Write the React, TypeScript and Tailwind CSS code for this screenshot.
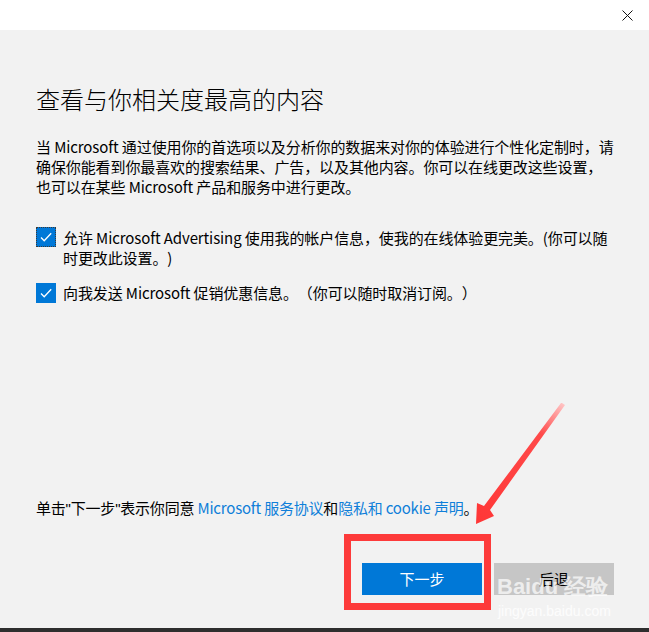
import React from "react";

const font = { fontFamily: '"Noto Sans CJK SC", "Noto Sans", sans-serif' };
const latin = { fontFamily: '"Liberation Sans", sans-serif' };

function CheckBox({ focused }: { focused?: boolean }) {
  return (
    <div
      className={
        "w-5 h-5 shrink-0 bg-[#0078d7] flex items-center justify-center " +
        (focused ? "outline outline-1 outline-dotted outline-[#3a3a3a] -outline-offset-1" : "")
      }
    >
      <svg width="20" height="20" viewBox="0 0 20 20">
        <path d="M5 10.5 L8.2 13.7 L15.2 6.2" fill="none" stroke="#fff" strokeWidth="1.3" />
      </svg>
    </div>
  );
}

export default function App() {
  return (
    <div
      className="relative w-[649px] h-[632px] flex flex-col bg-[#f2f2f2] text-black [text-spacing-trim:space-all]"
      style={font}
    >
      {/* title bar */}
      <div className="h-[30px] bg-white flex items-center justify-end pr-[16px]">
        <svg width="11" height="11" viewBox="0 0 11 11">
          <path d="M0.5 0.5 L10.5 10.5 M10.5 0.5 L0.5 10.5" stroke="#111" strokeWidth="1" />
        </svg>
      </div>

      <div className="flex-1 pl-[36px] flex flex-col">
        <h1 className="mt-[53px] text-[24px] leading-[32px] font-light">
          查看与你相关度最高的内容
        </h1>

        <p className="mt-[22px] text-[15px] leading-[20px] tracking-[-0.1px]">
          当 Microsoft 通过使用你的首选项以及分析你的数据来对你的体验进行个性化定制时，请
          <br />
          确保你能看到你最喜欢的搜索结果、广告，以及其他内容。你可以在线更改这些设置，
          <br />
          也可以在某些 Microsoft 产品和服务中进行更改。
        </p>

        <div className="mt-[30px] flex items-start gap-[7px]">
          <CheckBox focused />
          <div className="mt-px text-[15px] leading-[20px] tracking-[-0.1px]">
            允许 Microsoft Advertising 使用我的帐户信息，使我的在线体验更完美。(你可以随
            <br />
            时更改此设置。)
          </div>
        </div>

        <div className="mt-[15px] flex items-center gap-[7px]">
          <CheckBox />
          <div className="text-[15px] leading-[20px] tracking-[-0.1px]">
            向我发送 Microsoft 促销优惠信息。（你可以随时取消订阅。）
          </div>
        </div>

        <div className="mt-[195px] text-[15px] leading-[20px] tracking-[-0.2px]">
          单击<span style={latin}>"</span>下一步<span style={latin}>"</span>表示你同意{" "}
          <span className="text-[#0f7fd9]">Microsoft 服务协议</span>和
          <span className="text-[#0f7fd9]">隐私和 cookie 声明</span>。
        </div>

        <div className="mt-[44px] flex justify-end gap-[12px] pr-[35px]">
          <button className="w-[120px] h-[32px] bg-[#0078d7] text-white text-[15px]">下一步</button>
          <button className="relative w-[120px] h-[32px] bg-[#c6c6c6] text-black text-[15px]">
            后退
            <span
              className="absolute left-[3px] top-[12px] text-[22px] leading-[24px] font-bold text-white/70 whitespace-nowrap"
              style={latin}
            >
              Baidu 经验
            </span>
            <span
              className="absolute left-[4px] top-[40px] text-[14px] leading-[16px] text-white/80 whitespace-nowrap"
              style={latin}
            >
              jingyan.baidu.com
            </span>
          </button>
        </div>
      </div>

      <div className="h-[4px] bg-[#2e2e2e]" />

      {/* annotation overlay */}
      <div className="absolute left-[344px] top-[534px] w-[147px] h-[76px] border-[7px] border-[#fd3a3a] pointer-events-none" />
      <svg className="absolute left-0 top-0 pointer-events-none" width="649" height="632" viewBox="0 0 649 632">
        <defs>
          <linearGradient id="ag" x1="562" y1="403" x2="476" y2="524" gradientUnits="userSpaceOnUse">
            <stop offset="0" stopColor="#ffc4c4" />
            <stop offset="0.25" stopColor="#ff4a4a" />
            <stop offset="1" stopColor="#ff3636" />
          </linearGradient>
        </defs>
        <polygon
          points="562,403 565,405 490,510 494,516 476,524 477,503 484,506 561,403"
          fill="url(#ag)"
        />
      </svg>
    </div>
  );
}
